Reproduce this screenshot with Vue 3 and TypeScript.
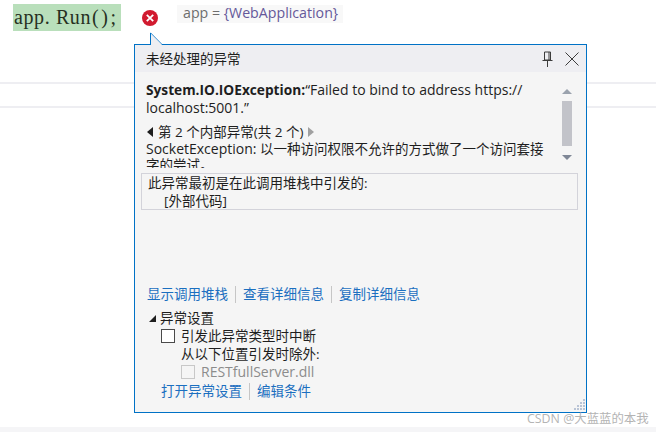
<script setup lang="ts">
const links = ['显示调用堆栈', '查看详细信息', '复制详细信息']
const grip: [number, number][] = [[9, 0], [9, 3], [6, 3], [9, 6], [6, 6], [3, 6], [9, 9], [6, 9], [3, 9], [0, 9]]
</script>

<template>
  <div class="page">
    <div class="code-row">
      <span class="code">app. Run<span class="parens">();</span></span>
      <svg class="err" width="16" height="16" viewBox="0 0 16 16">
        <circle cx="8" cy="8" r="8" fill="#d11a2f" />
        <path d="M4.8 4.8l6.4 6.4M11.2 4.8l-6.4 6.4" stroke="#fff" stroke-width="1.8" />
      </svg>
      <span class="hint">app = <span class="val">{WebApplication}</span></span>
    </div>
    <div class="rule rule-a"></div>
    <div class="rule rule-b"></div>
    <div class="bottom-band"></div>

    <svg class="tail" width="14" height="14" viewBox="0 0 14 14">
      <path d="M0.5 13V0.9L12 12.5" fill="#eeeef2" stroke="#0072c6" stroke-width="1" />
      <path d="M1 14V2L12.5 13.5V14z" fill="#eeeef2" />
    </svg>

    <section class="dialog">
      <header class="head">
        <span>未经处理的异常</span>
        <div class="head-icons">
          <svg width="11" height="16" viewBox="0 0 11 16">
            <path d="M2.5 1h6v8h-6zM0.5 9.5h10M5.5 10v6M7 1v8" fill="none" stroke="#3c3c3c" stroke-width="1" />
          </svg>
          <svg width="14" height="14" viewBox="0 0 14 14">
            <path d="M0.5 0.5l13 13M13.5 0.5l-13 13" fill="none" stroke="#3c3c3c" stroke-width="1" />
          </svg>
        </div>
      </header>

      <div class="msg">
        <div class="msg-text">
          <p class="title"><b>System.IO.IOException:</b>“Failed to bind to address https://<br />localhost:5001.”</p>
          <p class="pager">
            <i class="tri-l"></i>
            <span>第 2 个内部异常(共 2 个)</span>
            <i class="tri-r"></i>
          </p>
          <p class="socket"><span class="latin">SocketException:</span> 以一种访问权限不允许的方式做了一个访问套接<br />字的尝试。</p>
        </div>
        <div class="scroll">
          <i class="up"></i>
          <i class="thumb"></i>
          <i class="down"></i>
        </div>
      </div>

      <div class="stack">
        <div>此异常最初是在此调用堆栈中引发的:</div>
        <div class="stack-line">[外部代码]</div>
      </div>

      <nav class="links main-links">
        <a v-for="l in links" :key="l">{{ l }}</a>
      </nav>

      <div class="settings">
        <div class="set-head"><i class="corner"></i><span>异常设置</span></div>
        <div class="check-row"><i class="box"></i><span>引发此异常类型时中断</span></div>
        <div class="except">从以下位置引发时除外:</div>
        <div class="check-row dll"><i class="box dis"></i><span>RESTfullServer.dll</span></div>
        <nav class="links sub-links">
          <a>打开异常设置</a>
          <a>编辑条件</a>
        </nav>
      </div>

      <svg class="grip" width="12" height="12" viewBox="0 0 12 12">
        <rect v-for="(g, i) in grip" :key="i" :x="g[0]" :y="g[1]" width="2" height="2" fill="#b9c4d6" />
      </svg>
    </section>

    <span class="mark">CSDN @大蓝蓝的本我</span>
  </div>
</template>

<style>
html, body { margin: 0; background: #fff; }
</style>

<style scoped>
.page {
  position: relative;
  width: 656px;
  height: 432px;
  overflow: hidden;
  background: #fff;
  font-family: "Open Sans", "Noto Sans CJK SC", sans-serif;
  font-size: 13.5px;
  color: #1e1e1e;
}
.code-row { display: flex; align-items: flex-start; padding: 4px 0 0 13px; height: 27px; }
.code {
  background: #b9dfbb;
  width: 108px;
  height: 27px;
  line-height: 27px;
  font-family: "Liberation Serif", serif;
  font-size: 20px;
  white-space: nowrap;
  color: #26301f;
  letter-spacing: 0.6px;
  padding-left: 1px;
  box-sizing: border-box;
  overflow: hidden;
}
.parens { letter-spacing: 2.6px; margin-left: 1px; }
.err { margin: 6px 0 0 21px; flex: none; }
.hint {
  margin: 1px 0 0 19px;
  padding: 0 0 0 6px;
  width: 160px;
  height: 18px;
  line-height: 15px;
  background: #f8f8f8;
  color: #6d6d6d;
  font-size: 14.2px;
  white-space: nowrap;
}
.val { color: #65589a; }
.rule { height: 2px; background: #eeeef2; }
.rule-a { margin-top: 51px; }
.rule-b { margin-top: 22px; }
.bottom-band { height: 5px; margin-top: 319px; background: #f5f5f7; }
.tail { position: absolute; left: 150px; top: 32px; z-index: 2; }
.dialog {
  position: absolute;
  left: 134px;
  top: 44px;
  width: 451px;
  height: 367px;
  border: 1px solid #0072c6;
  background: #f5f5f5;
  display: flex;
  flex-direction: column;
}
.head {
  height: 27px;
  flex: none;
  background: #eeeef2;
  display: flex;
  align-items: center;
  justify-content: space-between;
  padding: 0 7px 2px 11px;
  box-sizing: border-box;
}
.head-icons { display: flex; align-items: center; gap: 12px; margin-top: 2px; }
.msg { display: flex; height: 101px; flex: none; overflow: hidden; padding: 9px 0 0 11px; box-sizing: border-box; }
.msg-text { width: 404px; height: 87px; overflow: hidden; }
p { margin: 0; }
.title { line-height: 18px; font-size: 14px; white-space: nowrap; }
.title b { font-weight: 700; font-size: 13.7px; }
.pager { display: flex; align-items: center; gap: 5px; margin-top: 6px; line-height: 18px; }
.tri-l, .tri-r { width: 0; height: 0; border-style: solid; border-color: transparent; border-width: 5px 0; }
.tri-l { border-right: 6px solid #1e1e1e; margin-left: 1px; }
.tri-r { border-left: 6px solid #a0a0a0; }
.socket { line-height: 16px; white-space: nowrap; }
.latin { font-size: 14px; }
.scroll { width: 10px; margin-left: 12px; display: flex; flex-direction: column; align-items: center; padding-top: 8px; }
.up, .down { width: 0; height: 0; border-style: solid; border-color: transparent; border-width: 0 5px; }
.up { border-bottom: 5px solid #9aa2ad; }
.down { border-top: 5px solid #7f8796; margin-top: 9px; }
.thumb { width: 10px; height: 45px; margin-top: 7px; background: #c2c3c9; flex: none; }
.stack {
  box-sizing: border-box;
  margin: 0 8px 0 6px;
  height: 37px;
  flex: none;
  border: 1px solid #d3d3da;
  padding: 0 6px;
  line-height: 18px;
}
.stack-line { padding-left: 16px; }
.links { display: flex; align-items: center; color: #1b6fc0; }
.links a { line-height: 17px; }
.links a + a { border-left: 1px solid #c6c6c6; margin-left: 7px; padding-left: 7px; }
.main-links { margin: 76px 0 0 12px; }
.settings { margin-top: 6px; padding-left: 12px; line-height: 18px; }
.set-head { display: flex; align-items: center; gap: 4px; padding-left: 2px; }
.corner { width: 0; height: 0; border-style: solid; border-color: transparent; border-width: 0 0 7px 7px; border-bottom-color: #1e1e1e; }
.check-row { display: flex; align-items: center; gap: 6px; padding-left: 14px; }
.box { width: 12px; height: 12px; border: 1px solid #4a4a4a; background: #fff; box-sizing: content-box; }
.except { padding-left: 34px; }
.dll { padding-left: 34px; color: #8c8c8c; font-size: 14px; }
.box.dis { border-color: #c8c8c8; background: #f5f5f5; }
.sub-links { padding-left: 14px; margin-top: 2px; }
.grip { position: absolute; right: 0; bottom: 1px; }
.mark {
  position: absolute;
  left: 527px;
  top: 410px;
  color: #9b9b9b;
  opacity: 0.75;
  font-size: 12.4px;
  line-height: 17px;
  white-space: nowrap;
}
</style>
